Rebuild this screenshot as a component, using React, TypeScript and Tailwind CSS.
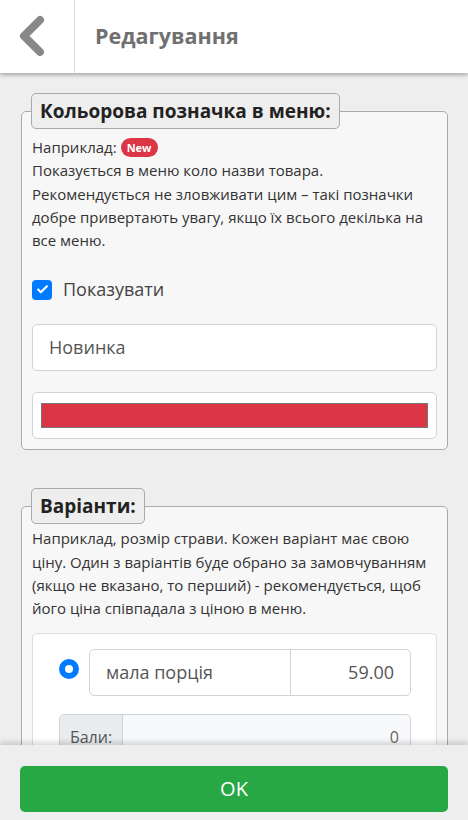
import { Check } from "lucide-react";

function Legend({ children }: { children: React.ReactNode }) {
  return (
    <legend className="-ml-[1px] px-[8px] py-[1px] bg-[#eeeeee] border border-[#aaaaaa] rounded-[5px] text-[19px] leading-[32px] font-bold text-[#222]">
      {children}
    </legend>
  );
}

export default function App() {
  return (
    <div className="h-[820px] flex flex-col bg-[#eeeeee] overflow-hidden font-['Open_Sans',sans-serif] text-[#333]">
      {/* Header */}
      <header className="relative z-10 h-[73px] shrink-0 flex bg-white shadow-[0_2px_4px_rgba(0,0,0,0.3)]">
        <button className="w-[75px] flex items-center justify-center border-r border-[#dddddd]">
          <svg width="34" height="44" viewBox="0 0 34 44" className="-ml-[11px] -mt-[2px]">
            <path d="M25 6 L9 22 L25 38" fill="none" stroke="#888888" strokeWidth="8" strokeLinecap="round" strokeLinejoin="round" />
          </svg>
        </button>
        <h1 className="flex items-center pl-[20px] text-[21.5px] font-bold text-[#707070]">Редагування</h1>
      </header>

      {/* Content */}
      <main className="flex-1 overflow-hidden pl-[21px] pr-[20px] pt-[20px]">
        <fieldset className="border border-[#aaaaaa] rounded-[5px] bg-[#f7f7f7] px-[10px] pb-[10px]">
          <Legend>Кольорова позначка в меню:</Legend>
          <div className="text-[15px] leading-[23.3px] mt-[7px]">
            <div className="flex items-center gap-[4px]">
              Наприклад:
              <span className="inline-flex items-center h-[19px] px-[6px] rounded-full bg-[#dc3545] text-white text-[11px] font-bold">New</span>
            </div>
            <p>Показується в меню коло назви товара.</p>
            <p>Рекомендується не зловживати цим – такі позначки добре привертають увагу, якщо їх всього декілька на все меню.</p>
          </div>

          <label className="mt-[24px] flex items-center gap-[11px] text-[18px] text-[#444]">
            <span className="w-[20px] h-[20px] rounded-[4px] bg-[#007bff] flex items-center justify-center">
              <Check className="w-[13px] h-[13px] text-white" strokeWidth={4} />
            </span>
            Показувати
          </label>

          <div className="mt-[21px] h-[47px] bg-white border border-[#ced4da] rounded-[5px] flex items-center px-[16px] text-[18px] text-[#555]">
            Новинка
          </div>

          <div className="mt-[21px] h-[47px] bg-white border border-[#ced4da] rounded-[5px] flex items-center px-[8px]">
            <div className="w-full h-[25px] bg-[#dc3545] border border-[#777]" />
          </div>
        </fieldset>

        <fieldset className="mt-[38px] border border-[#aaaaaa] rounded-[5px] bg-[#f7f7f7] px-[10px] pb-[10px]">
          <Legend>Варіанти:</Legend>
          <p className="text-[15px] leading-[23.3px] mt-[3px]">
            Наприклад, розмір страви. Кожен варіант має свою ціну. Один з варіантів буде обрано за замовчуванням (якщо не вказано, то перший) - рекомендується, щоб його ціна співпадала з ціною в меню.
          </p>
          <div className="mt-[12px] bg-white border border-[#dddddd] rounded-[5px] pl-[26px] pr-[25px] pt-[15px] pb-[16px]">
            <div className="flex items-center gap-[10px]">
              <span className="w-[20px] h-[20px] rounded-full bg-[#007bff] flex items-center justify-center shrink-0 -mt-[6px]">
                <span className="w-[8px] h-[8px] rounded-full bg-white" />
              </span>
              <div className="flex-1 flex h-[47px] border border-[#ced4da] rounded-[5px] text-[18px] text-[#555]">
                <div className="flex-1 flex items-center pl-[16px] border-r border-[#ced4da]">мала порція</div>
                <div className="w-[119px] flex items-center justify-end pr-[16px]">59.00</div>
              </div>
            </div>
            <div className="mt-[18px] flex h-[47px] border border-[#ced4da] rounded-[5px] text-[16px] text-[#555]">
              <div className="w-[63px] flex items-center justify-center bg-[#e9ecef] border-r border-[#ced4da] rounded-l-[5px]">Бали:</div>
              <div className="flex-1 flex items-center justify-end pr-[11px] bg-[#f8f9fa] rounded-r-[5px] text-[#666]">0</div>
            </div>
          </div>
        </fieldset>
      </main>

      {/* Footer */}
      <footer className="relative z-10 h-[75px] shrink-0 bg-[#eeeeee] shadow-[0_-3px_5px_rgba(0,0,0,0.15)] px-[20px] pt-[21px]">
        <button className="w-full h-[46px] rounded-[5px] bg-[#28a745] text-white text-[20px]">OK</button>
      </footer>
    </div>
  );
}
